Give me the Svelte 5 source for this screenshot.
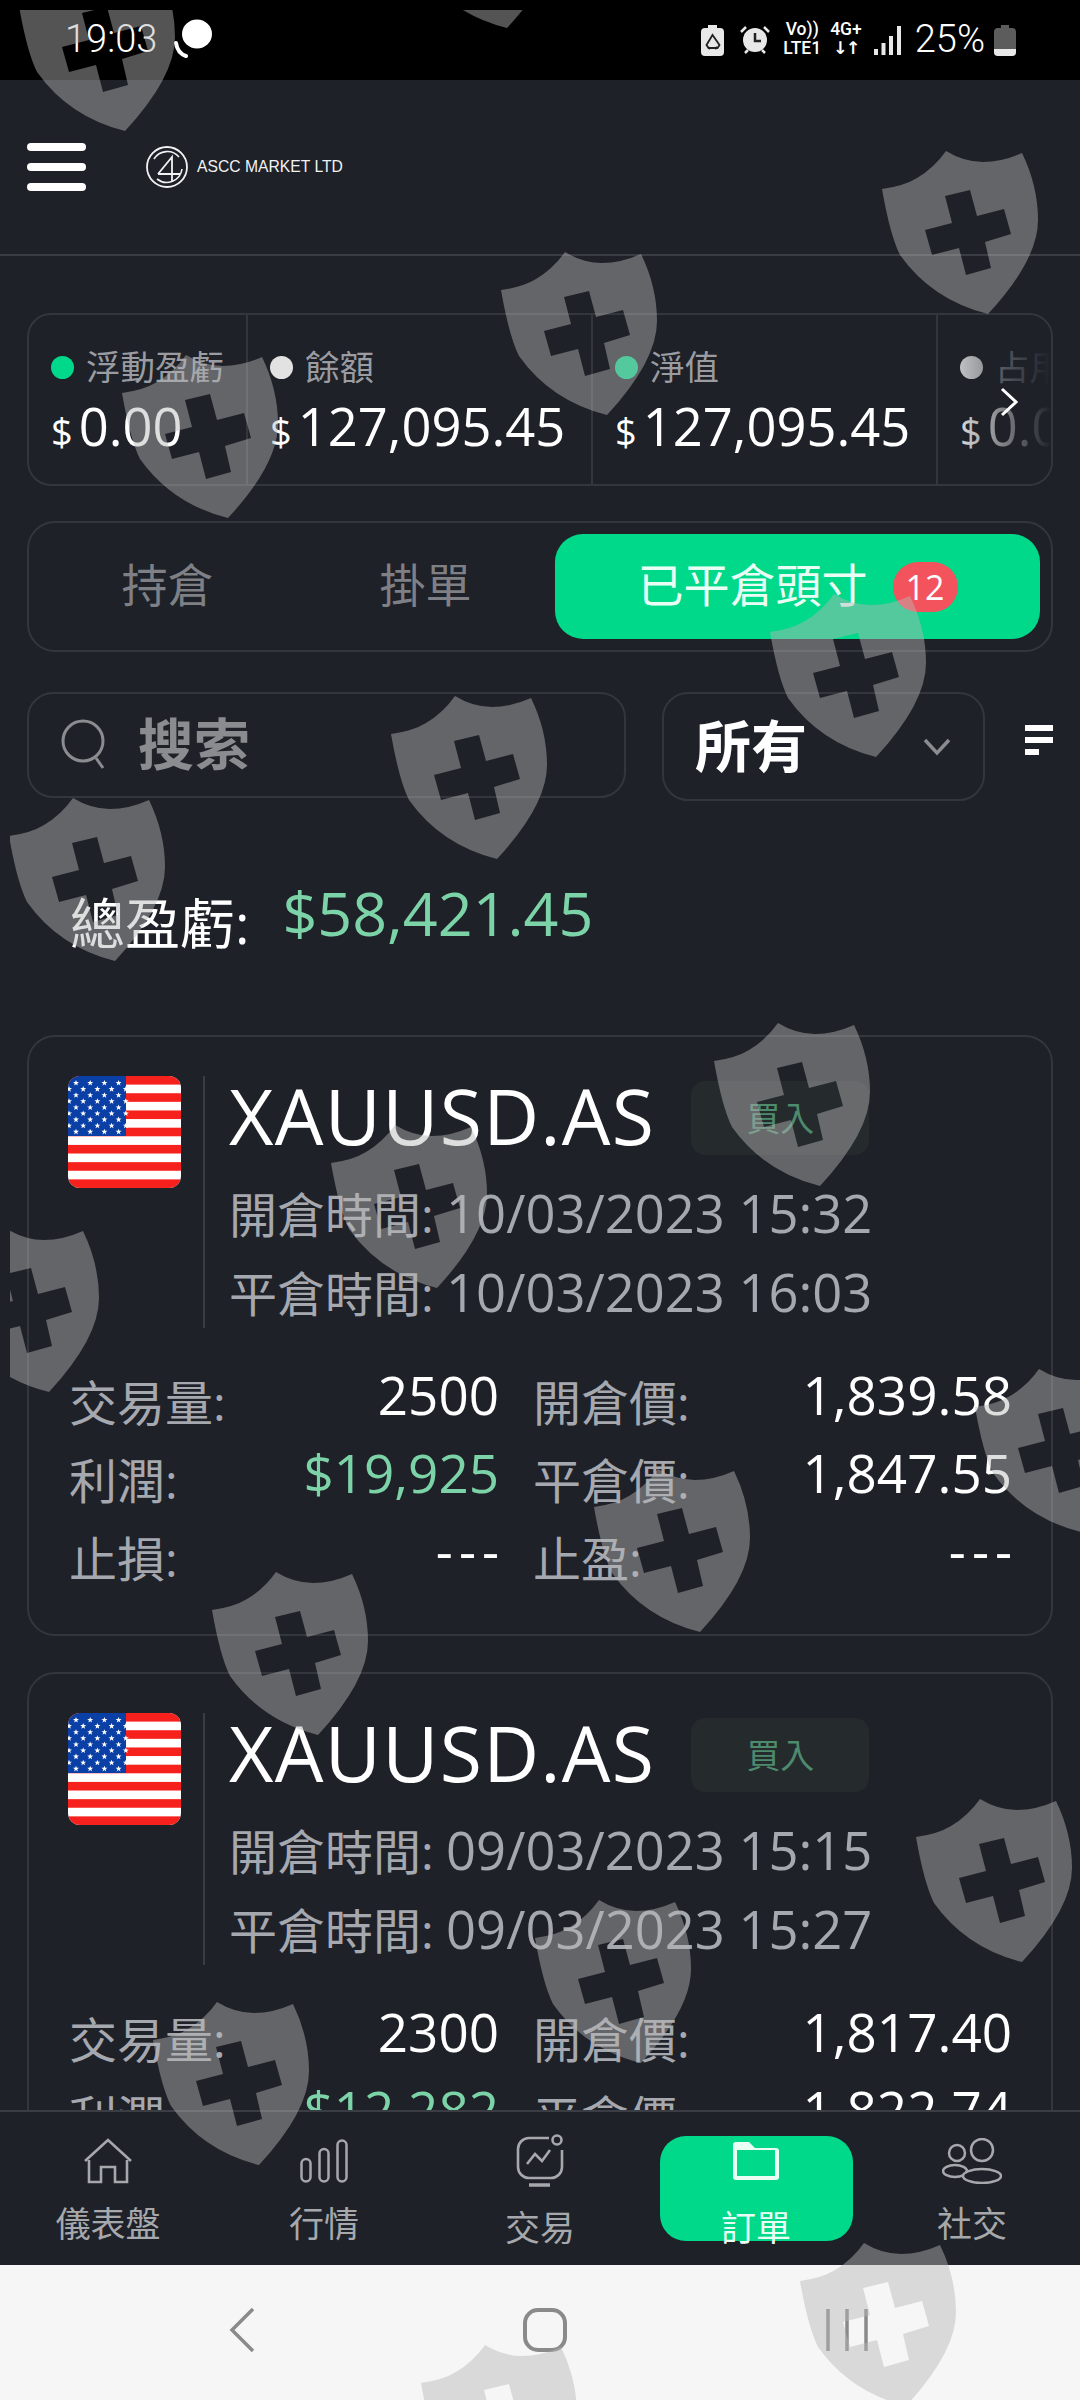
<script lang="ts">
  const cards = [
    {
      open: "10/03/2023 15:32",
      close: "10/03/2023 16:03",
      volume: "2500",
      profit: "$19,925",
      openPrice: "1,839.58",
      closePrice: "1,847.55",
    },
    {
      open: "09/03/2023 15:15",
      close: "09/03/2023 15:27",
      volume: "2300",
      profit: "$12,282",
      openPrice: "1,817.40",
      closePrice: "1,822.74",
    },
  ];

  const balances = [
    { label: "浮動盈虧", value: "0.00", dot: "#00d88a", w: 219 },
    { label: "餘額", value: "127,095.45", dot: "#e2e2e2", w: 345 },
    { label: "淨值", value: "127,095.45", dot: "#00d88a", w: 345 },
    { label: "占用", value: "0.00", dot: "#e2e2e2", w: 200 },
  ];

  const tabs = [
    { key: "home", label: "儀表盤", low: false },
    { key: "bars", label: "行情", low: false },
    { key: "trade", label: "交易", low: true },
    { key: "orders", label: "訂單", low: true, active: true },
    { key: "social", label: "社交", low: false },
  ];

  // top-left corner of each watermark shield, page coordinates
  const shields = [
    [19, -33], [401, -136], [882, 150], [501, 251], [122, 354], [770, 593],
    [391, 695], [9, 797], [714, 1022], [331, 1124], [-57, 1228], [975, 1368],
    [594, 1468], [212, 1571], [916, 1798], [535, 1899], [153, 2001], [800, 2242],
    [421, 2344],
  ];

  const stars: [number, number][] = [];
  for (let r = 0; r < 9; r++) {
    const odd = r % 2 === 1;
    for (let c = 0; c < (odd ? 5 : 4); c++) {
      stars.push([(odd ? 1 : 8) + c * 14.2, 7 + r * 6.1]);
    }
  }
  const star = "0,-3 .8,-1 3,-1 1.2,.4 1.9,2.6 0,1.3 -1.9,2.6 -1.2,.4 -3,-1 -.8,-1";
</script>

<div class="app">
  <div class="status">
    <span class="clock">19:03</span>
    <svg class="chat" width="40" height="40" viewBox="0 0 40 40">
      <ellipse cx="23" cy="15" rx="15" ry="14.500" fill="#fff" />
      <path d="M2 24c1 7 4 11 10 13" fill="none" stroke="#fff" stroke-width="4" stroke-linecap="round" />
    </svg>
    <span class="grow"></span>
    <svg class="s-ic" width="23" height="31" viewBox="0 0 23 31">
      <path d="M7 0h9v3h3a4 4 0 0 1 4 4v20a4 4 0 0 1-4 4H4a4 4 0 0 1-4-4V7a4 4 0 0 1 4-4h3z" fill="#e8e8e8" />
      <path d="M11.500 10l-6 10 2 3h9l2-3zM9 24l-2-2M14 24l2-2" stroke="#222" stroke-width="1.800" fill="none" />
    </svg>
    <svg class="s-ic alarm" width="30" height="30" viewBox="0 0 30 30">
      <circle cx="15" cy="15" r="12" fill="#e8e8e8" />
      <path d="M15 8v8h6" stroke="#222" stroke-width="2.500" fill="none" />
      <path d="M1 7l5-5M29 7l-5-5M5 28l3-3M25 28l-3-3" stroke="#e8e8e8" stroke-width="2.500" />
    </svg>
    <span class="net first"><span>Vo))</span><span>LTE1</span></span>
    <span class="net"><span>4G+</span><span class="arrows">↓↑</span></span>
    <svg class="s-ic signal" width="27" height="29" viewBox="0 0 27 29">
      <path d="M0 23h4v6H0zM7.500 17h4v12h-4zM15 10h4v19h-4zM23 0h4v29h-4z" fill="#e8e8e8" />
    </svg>
    <span class="pct">25%</span>
    <svg class="s-ic" width="22" height="31" viewBox="0 0 22 31">
      <path d="M7 0h8v3h3a4 4 0 0 1 4 4v20a4 4 0 0 1-4 4H4a4 4 0 0 1-4-4V7a4 4 0 0 1 4-4h3z" fill="#5c5c5c" />
      <path d="M0 24h22v3a4 4 0 0 1-4 4H4a4 4 0 0 1-4-4z" fill="#e8e8e8" />
    </svg>
  </div>

  <header class="top">
    <div class="burger"><i></i><i></i><i></i></div>
    <svg class="logo" width="42" height="42" viewBox="0 0 42 42" fill="none" stroke="#f2f2f2">
      <circle cx="21" cy="21" r="20" stroke-width="1.800" />
      <path d="M8 13A15.500 15.500 0 0 1 33 11M36 23A15.500 15.500 0 0 1 11 33" stroke-width="1.600" />
      <path d="M12 28L26 11V36M12 28H34" stroke-width="1.800" />
    </svg>
    <span class="brand">ASCC MARKET LTD</span>
  </header>

  <main class="main">
    <section class="balance">
      {#each balances as b}
        <div class="cell" style="width:{b.w}px">
          <div class="cell-label"><i class="dot" style="background:{b.dot}"></i>{b.label}</div>
          <div class="cell-value"><small>$</small>{b.value}</div>
        </div>
      {/each}
      <div class="fade"></div>
      <svg class="more" width="20" height="30" viewBox="0 0 20 30" fill="none" stroke="#fff" stroke-width="3">
        <path d="M3 2l14 13L3 28" />
      </svg>
    </section>

    <section class="switch">
      <button class="sw"><span>持倉</span></button>
      <button class="sw"><span>掛單</span></button>
      <button class="sw on"><span>已平倉頭寸</span><span class="badge">12</span></button>
    </section>

    <section class="filters">
      <div class="search">
        <svg width="48" height="54" viewBox="0 0 48 54" fill="none" stroke="#8b8c90" stroke-width="3">
          <circle cx="23" cy="23" r="20" />
          <path d="M36 40l7 10" />
        </svg>
        <span>搜索</span>
      </div>
      <div class="select">
        <span>所有</span>
        <svg width="28" height="18" viewBox="0 0 28 18" fill="none" stroke="#8b8c90" stroke-width="3.500">
          <path d="M2 2l12 13L26 2" />
        </svg>
      </div>
      <div class="sort"><i></i><i></i><i></i></div>
    </section>

    <div class="total">總盈虧:<b>$58,421.45</b></div>

    {#each cards as c}
      <article class="card">
        <div class="head">
          <svg class="flag" width="113" height="112" viewBox="0 0 113 112">
            <rect width="113" height="112" fill="#fff" />
            {#each Array(7) as _, i}
              <rect y={i * 17.230} width="113" height="8.600" fill="#f6211c" />
            {/each}
            <rect width="58" height="60" fill="#0a3fa6" />
            {#each stars as [x, y]}
              <polygon points={star} transform="translate({x} {y})" fill="#fff" />
            {/each}
          </svg>
          <div class="info">
            <div class="title-row">
              <h2>XAUUSD.AS</h2>
              <span class="side">買入</span>
            </div>
            <p>開倉時間: <span>{c.open}</span></p>
            <p>平倉時間: <span>{c.close}</span></p>
          </div>
        </div>
        <div class="stats">
          <div class="row"><span>交易量:</span><b>{c.volume}</b></div>
          <div class="row"><span>開倉價:</span><b>{c.openPrice}</b></div>
          <div class="row"><span>利潤:</span><b class="up">{c.profit}</b></div>
          <div class="row"><span>平倉價:</span><b>{c.closePrice}</b></div>
          <div class="row"><span>止損:</span><b class="dash">---</b></div>
          <div class="row"><span>止盈:</span><b class="dash">---</b></div>
        </div>
      </article>
    {/each}
  </main>

  <nav class="nav">
    {#each tabs as t}
      <div class="tab" class:active={t.active} class:low={t.low}>
        <div class="tab-icon">
          {#if t.key === "home"}
            <svg width="48" height="46" viewBox="0 0 48 46" fill="none" stroke="#a6a8ac" stroke-width="2.600">
              <path d="M1 23L24 2l23 21M5 22v22h12V29h14v15h12V22" />
            </svg>
          {:else if t.key === "bars"}
            <svg width="48" height="44" viewBox="0 0 48 44" fill="none" stroke="#a6a8ac" stroke-width="2.500">
              <rect x="1.500" y="20" width="9" height="22.500" rx="4.500" />
              <rect x="19.500" y="10" width="9" height="32.500" rx="4.500" />
              <rect x="37.500" y="1.500" width="9" height="41" rx="4.500" />
            </svg>
          {:else if t.key === "trade"}
            <svg width="50" height="56" viewBox="0 0 50 56" fill="none" stroke="#a6a8ac" stroke-width="2.600">
              <path d="M34 5H14A11 11 0 0 0 3 16v18a11 11 0 0 0 11 11h22a11 11 0 0 0 11-11V17" />
              <circle cx="42" cy="7" r="4.500" />
              <path d="M12 31l8-10 7 7 8-11" />
              <path d="M14 52h21" stroke-width="3.500" />
            </svg>
          {:else if t.key === "orders"}
            <svg width="48" height="40" viewBox="0 0 48 40">
              <path d="M4 1h13l6 6h21a3 3 0 0 1 3 3v26a3 3 0 0 1-3 3H4a3 3 0 0 1-3-3V4a3 3 0 0 1 3-3z" fill="#e9fff5" />
              <rect x="5" y="9" width="38" height="26" fill="#00d88a" />
            </svg>
          {:else}
            <svg width="60" height="46" viewBox="0 0 60 46" fill="none" stroke="#a6a8ac" stroke-width="2.500">
              <circle cx="15" cy="15" r="8" />
              <circle cx="40" cy="12" r="11" />
              <ellipse cx="13" cy="33" rx="12" ry="6" />
              <ellipse cx="40" cy="38" rx="19" ry="7" fill="#1e2128" />
            </svg>
          {/if}
        </div>
        <span class="tab-label">{t.label}</span>
      </div>
    {/each}
  </nav>

  <footer class="sys">
    <svg width="26" height="46" viewBox="0 0 26 46" fill="none" stroke="#8a8a8a" stroke-width="3.500">
      <path d="M24 2L3 23l21 21" />
    </svg>
    <svg width="46" height="44" viewBox="0 0 46 44" fill="none" stroke="#8a8a8a" stroke-width="4">
      <rect x="3" y="2" width="40" height="40" rx="13" />
    </svg>
    <svg width="42" height="44" viewBox="0 0 42 44" fill="none" stroke="#8a8a8a" stroke-width="3.500">
      <path d="M2 1v42M21 1v42M40 1v42" />
    </svg>
  </footer>

  <svg class="marks" width="1070" height="2390" viewBox="10 10 1070 2390">
    {#each shields as [x, y]}
      <path
        transform="translate({x} {y})"
        fill-rule="evenodd"
        d="M64 1Q82 12 101 12 120 12 140 3 156 36 156 70 156 110 106 164 50 150 18 105 8 85 0 39 22 36 35 28 52 18 64 1ZM63 46L88 40 95 66 122 59 129 84 103 92 109 118 84 125 77 98 50 105 43 80 70 73Z"
      />
    {/each}
  </svg>
</div>

<style>
  :global(body) {
    margin: 0;
    background: #1e2128;
  }
  .app {
    position: relative;
    width: 1080px;
    height: 2400px;
    overflow: hidden;
    display: flex;
    flex-direction: column;
    background: #1e2128;
    color: #fff;
    font-family: "Open Sans", "Noto Sans CJK TC", sans-serif;
  }
  i {
    display: block;
  }

  .status {
    height: 80px;
    flex: none;
    background: #000;
    display: flex;
    align-items: center;
    padding: 0 64px 2px 65px;
    box-sizing: border-box;
    font-family: Roboto, sans-serif;
    font-weight: 300;
  }
  .clock, .pct {
    font-size: 38px;
    line-height: 44px;
  }
  .chat {
    margin-left: 17px;
  }
  .grow {
    flex: 1;
  }
  .s-ic {
    margin-top: 2px;
  }
  .alarm {
    margin-left: 16px;
  }
  .net {
    display: flex;
    flex-direction: column;
    align-items: center;
    font-size: 17.500px;
    line-height: 19px;
    font-weight: 500;
    margin-left: 9px;
  }
  .net.first {
    margin-left: 13px;
  }
  .arrows {
    font-weight: 700;
    font-family: "DejaVu Sans", sans-serif;
    letter-spacing: -2px;
  }
  .signal {
    margin-left: 12px;
  }
  .pct {
    margin: 0 9px 0 14px;
  }

  .top {
    height: 176px;
    flex: none;
    display: flex;
    align-items: center;
    box-sizing: border-box;
    padding-left: 27px;
    border-bottom: 2px solid #3a3d44;
  }
  .burger {
    display: flex;
    flex-direction: column;
    gap: 12px;
    width: 59px;
    margin-right: 60px;
  }
  .burger i {
    height: 8px;
    border-radius: 4px;
    background: #fff;
  }
  .brand {
    margin-left: 9px;
    font: 400 15.700px "Liberation Sans", sans-serif;
    color: #f2f2f2;
  }

  .main {
    flex: 1;
    min-height: 0;
    overflow: hidden;
    padding: 57px 27px 0;
  }

  .balance {
    position: relative;
    display: flex;
    height: 173px;
    border: 2px solid #33363d;
    border-radius: 24px;
    box-sizing: border-box;
    overflow: hidden;
  }
  .cell {
    flex: none;
    box-sizing: border-box;
    padding: 30px 0 0 22px;
    border-right: 2px solid #33363d;
  }
  .cell-label {
    display: flex;
    align-items: center;
    color: #9a9ca2;
    font-size: 34.500px;
    line-height: 44px;
  }
  .dot {
    width: 23px;
    height: 23px;
    border-radius: 50%;
    margin-right: 12px;
  }
  .cell-value {
    margin-top: 6px;
    font-size: 52.500px;
    line-height: 62px;
    font-weight: 500;
    white-space: nowrap;
  }
  .cell-value small {
    font-size: 38px;
    font-weight: 400;
    margin-right: 6px;
  }
  .fade {
    position: absolute;
    top: 0;
    right: 0;
    bottom: 0;
    width: 110px;
    background: linear-gradient(to right, rgba(30, 33, 40, 0), #1e2128);
  }
  .more {
    position: absolute;
    right: 32px;
    top: 72px;
  }

  .switch {
    margin-top: 35px;
    height: 131px;
    box-sizing: border-box;
    border: 2px solid #33363d;
    border-radius: 28px;
    padding: 11px 10px;
    display: grid;
    grid-template-columns: 257px 259px 485px;
  }
  .sw {
    border: 0;
    background: none;
    padding: 0;
    color: #7e8086;
    font: inherit;
    font-size: 46px;
    display: flex;
    align-items: center;
    justify-content: center;
  }
  .sw span:first-child {
    padding-bottom: 9px;
  }
  .sw.on {
    background: #00d88a;
    border-radius: 28px;
    color: #e9fff5;
  }
  .sw .badge {
    margin-left: 25px;
    width: 65px;
    height: 50px;
    border-radius: 25px;
    background: #f2535c;
    color: #fff;
    font-size: 34px;
    line-height: 50px;
    text-align: center;
  }

  .filters {
    margin-top: 40px;
    display: flex;
    align-items: flex-start;
  }
  .search {
    width: 599px;
    height: 106px;
    box-sizing: border-box;
    border: 2px solid #33363d;
    border-radius: 26px;
    display: flex;
    align-items: center;
    padding-left: 31px;
    color: #8b8c90;
    font-size: 56px;
    font-weight: 700;
  }
  .search span {
    margin-left: 30px;
    padding-bottom: 10px;
  }
  .select {
    width: 323px;
    height: 109px;
    margin-left: 36px;
    box-sizing: border-box;
    border: 2px solid #33363d;
    border-radius: 26px;
    display: flex;
    align-items: center;
    justify-content: space-between;
    padding: 0 32px 0 31px;
    font-size: 56px;
    font-weight: 700;
  }
  .select span {
    padding-bottom: 8px;
  }
  .sort {
    margin: 33px 0 0 40px;
    width: 28px;
    display: flex;
    flex-direction: column;
    gap: 6px;
  }
  .sort i {
    height: 6px;
    background: #fff;
  }
  .sort i:last-child {
    width: 14px;
  }

  .total {
    margin: 92px 0 82px 43px;
    height: 60px;
    display: flex;
    align-items: center;
    font-size: 55px;
    line-height: 60px;
  }
  .total b {
    margin-left: 33px;
    margin-bottom: 20px;
    font-size: 61px;
    font-weight: 500;
    color: #7dd3a8;
  }

  .card {
    height: 601px;
    box-sizing: border-box;
    margin-bottom: 36px;
    border: 2px solid #33363d;
    border-radius: 28px;
    padding: 39px 38px 0 40px;
  }
  .head {
    display: flex;
    margin-left: -1px;
  }
  .flag {
    flex: none;
    border-radius: 12px;
  }
  .info {
    margin-left: 22px;
    padding-left: 24px;
    height: 252px;
    border-left: 2px solid #3a3d44;
  }
  .title-row {
    display: flex;
    align-items: flex-start;
    height: 98px;
  }
  h2 {
    margin: 0;
    font-size: 77px;
    line-height: 80px;
    font-weight: 500;
    letter-spacing: 1.300px;
    white-space: nowrap;
  }
  .side {
    margin: 5px 0 0 36px;
    width: 178px;
    height: 74px;
    border-radius: 14px;
    background: #252a2d;
    color: #4d8a6e;
    font-size: 34px;
    line-height: 74px;
    text-align: center;
  }
  p {
    margin: 0;
    color: #a6a8b0;
    font-size: 48px;
    line-height: 77px;
    white-space: nowrap;
  }
  p span {
    font-size: 52.500px;
    font-weight: 500;
  }
  .stats {
    margin-top: 33px;
    display: grid;
    grid-template-columns: 430px 479px;
    column-gap: 34px;
    grid-auto-rows: 78px;
  }
  .row {
    display: flex;
    align-items: center;
    justify-content: space-between;
    color: #a6a8b0;
    font-size: 48px;
  }
  .row b {
    padding-bottom: 12px;
    font-size: 53px;
    font-weight: 500;
    color: #fff;
  }
  .row b.up {
    color: #7dd3a8;
  }
  .row b.dash {
    letter-spacing: 6px;
    margin-right: -6px;
    padding-bottom: 14px;
  }

  .nav {
    position: relative;
    height: 155px;
    flex: none;
    box-sizing: border-box;
    background: #1e2128;
    border-top: 2px solid #3a3d44;
    padding-top: 24px;
    display: grid;
    grid-template-columns: repeat(5, 216px);
  }
  .tab {
    width: 193px;
    height: 105px;
    margin: 0 auto;
    border-radius: 26px;
    display: flex;
    flex-direction: column;
    align-items: center;
    color: #a6a8ac;
    font-size: 35px;
  }
  .tab.active {
    background: #00d88a;
    color: #e9fff5;
  }
  .tab-icon {
    height: 58px;
    display: flex;
    align-items: center;
    justify-content: center;
    flex: none;
    margin-top: -4px;
  }
  .tab svg {
    display: block;
  }
  .tab-label {
    line-height: 44px;
    margin-top: 12px;
    white-space: nowrap;
    flex: none;
  }
  .tab.low .tab-label {
    margin-top: 16px;
  }

  .sys {
    height: 135px;
    flex: none;
    background: #f6f6f6;
    display: grid;
    grid-template-columns: 255px 313px 300px;
    align-items: center;
    justify-items: end;
    padding-bottom: 6px;
    box-sizing: border-box;
  }

  .marks {
    position: absolute;
    left: 10px;
    top: 10px;
    fill: rgba(182, 182, 182, .46);
    pointer-events: none;
  }
</style>
